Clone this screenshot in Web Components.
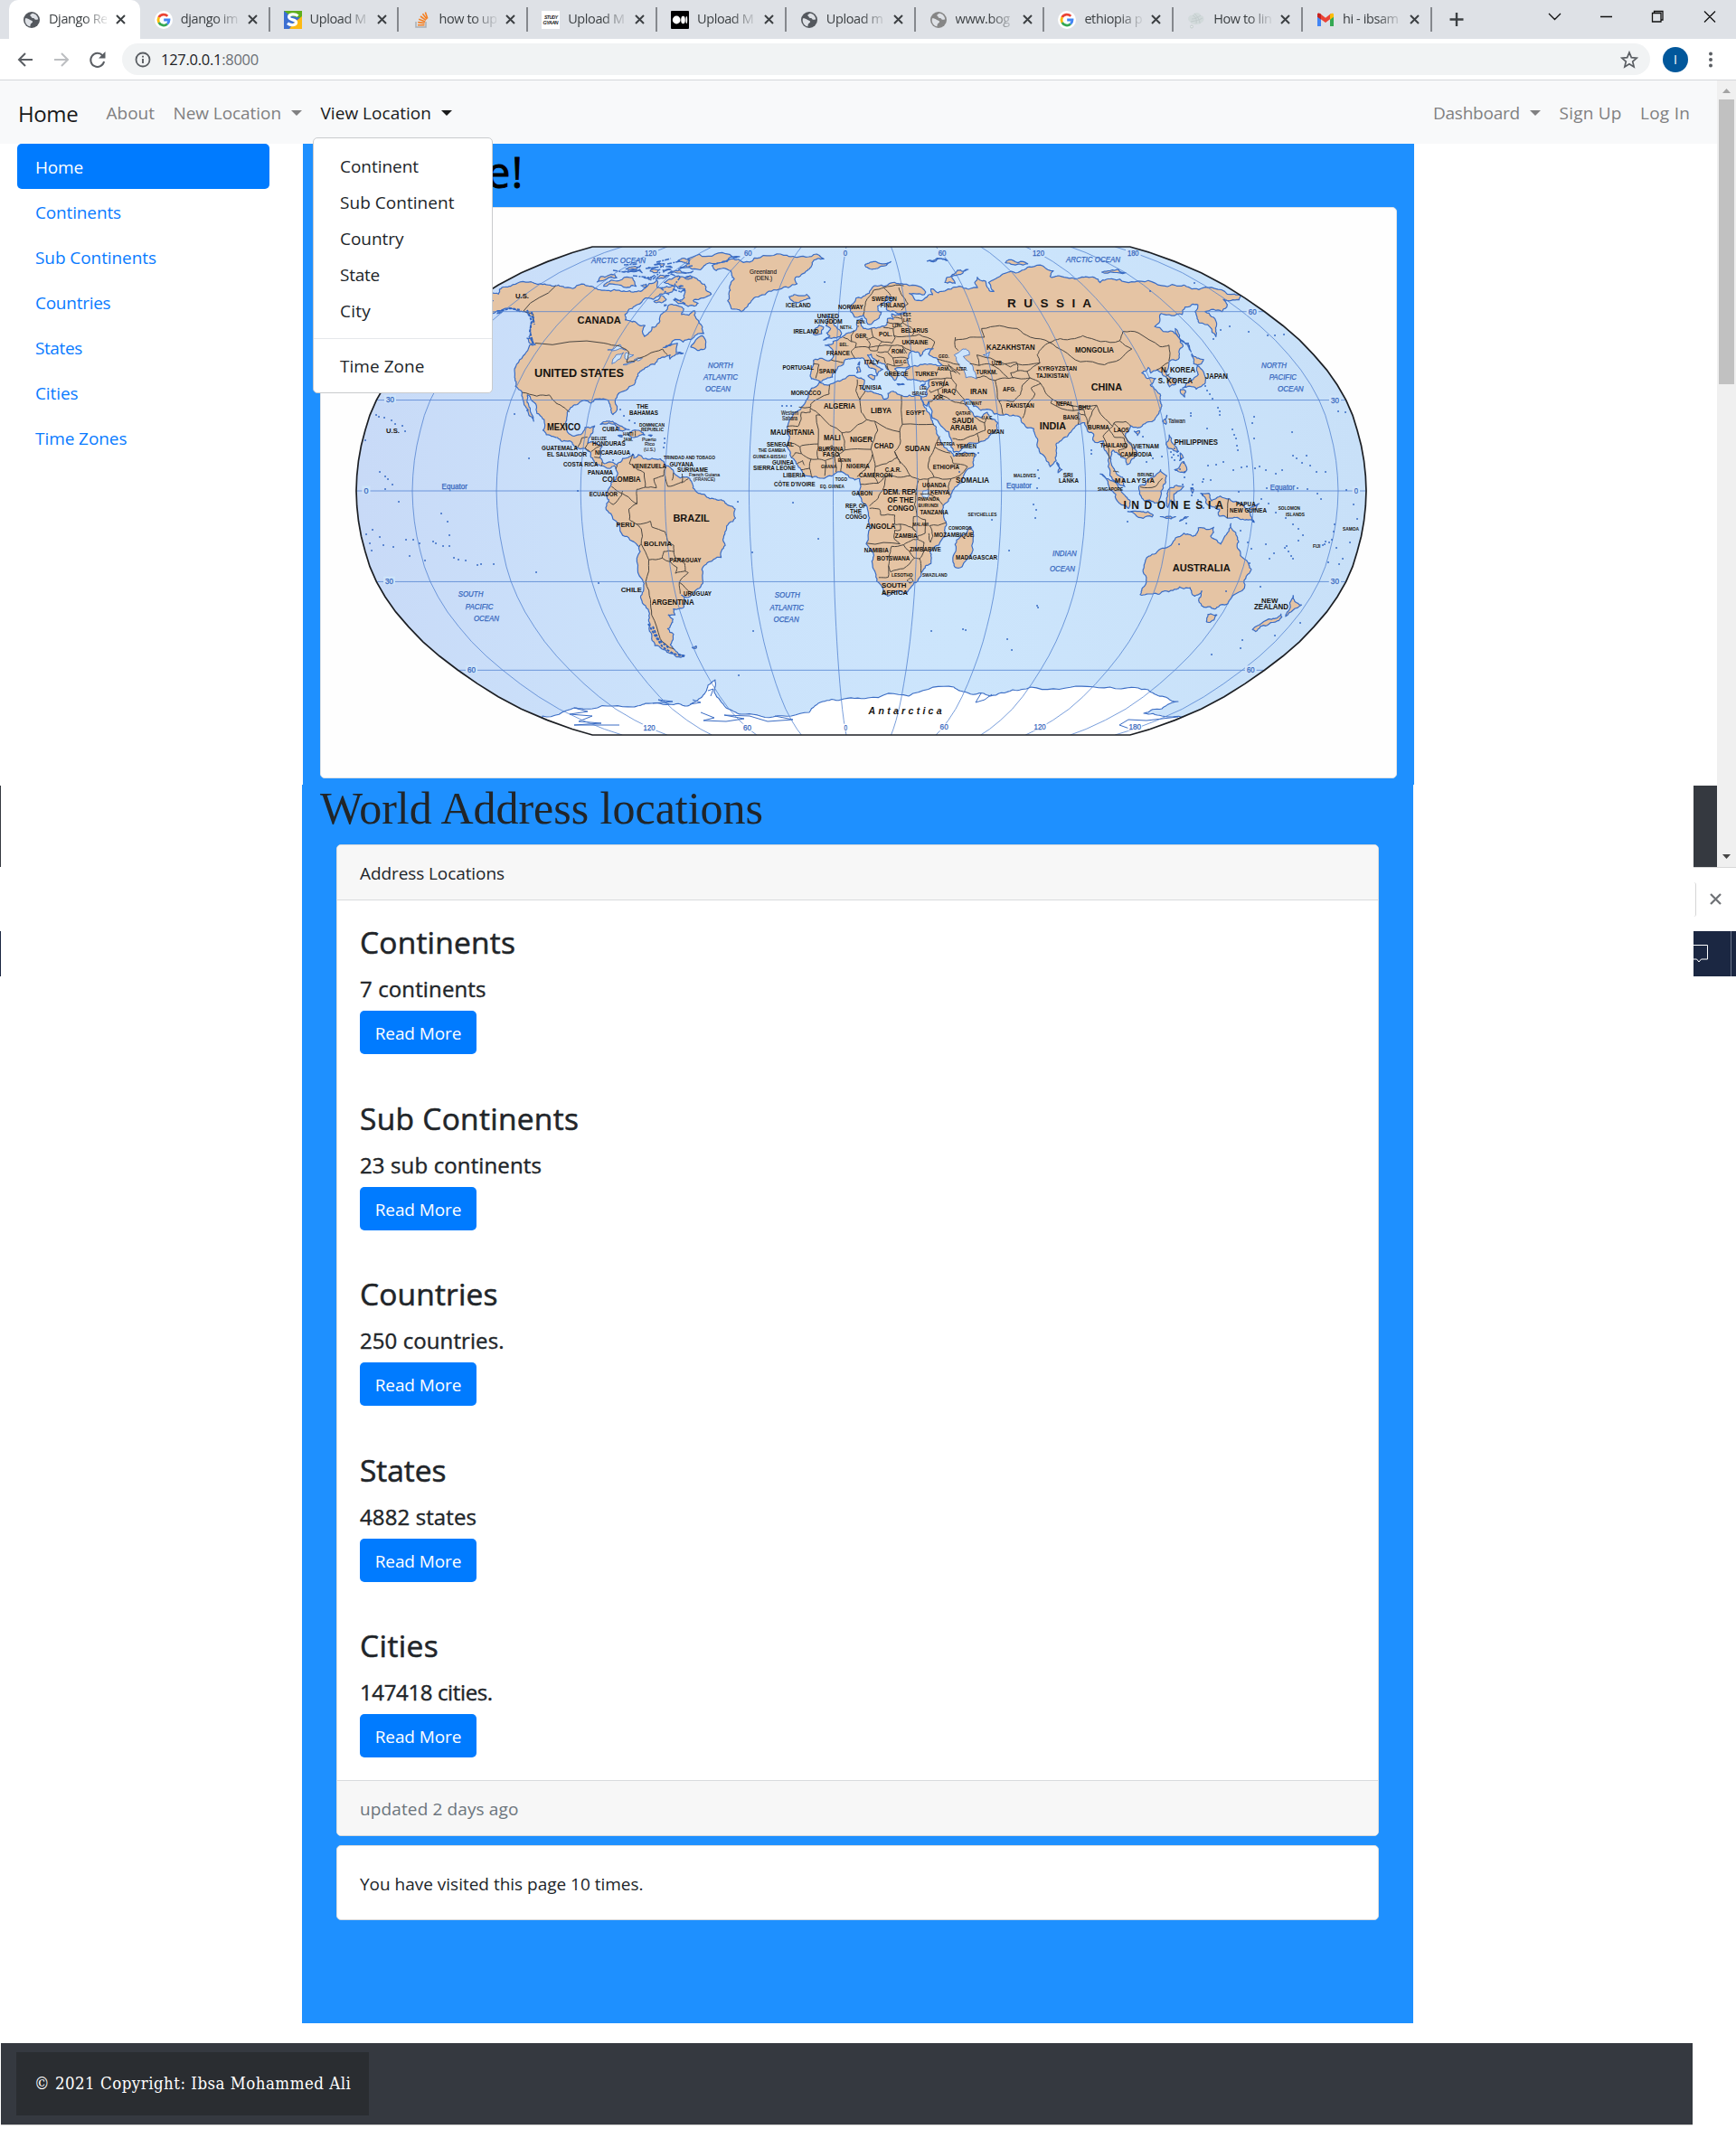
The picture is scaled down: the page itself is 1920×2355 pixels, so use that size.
<!DOCTYPE html>
<html lang="en">
<head>
<meta charset="utf-8">
<title>Django Rest</title>
<style>
html,body{margin:0;background:#fff}
body{font-family:"Open Sans","Noto Sans",sans-serif;font-size:19px;color:#212529;width:1920px;height:2355px;overflow:hidden}
</style>
</head>
<body>
<address-app></address-app>
<script>
const def=(name,html,init)=>customElements.define(name,class extends HTMLElement{
  connectedCallback(){
    if(this.shadowRoot)return;
    const r=this.attachShadow({mode:'open'});
    r.innerHTML=typeof html==='function'?html(this):html;
    if(init)init(this,r);
  }
});

/* ---------- application frame ---------- */
def('address-app',`<style>
:host{display:block}
.shell{display:grid;grid-template-columns:1920px}
.shell>*{grid-area:1/1}
edge-rail{justify-self:end}
.page{display:flex;flex-direction:column;width:1899px}
.cols{display:flex;align-items:flex-start}
side-nav{width:279px;margin:0 37px 0 19px}
main{display:flex;flex-direction:column}
.hero{background:#1e90ff;width:1191px;height:709px;padding:0 19px}
h1{margin:0 0 0 184px;height:69px;padding-top:1px;font-size:47px;line-height:61px;font-weight:400;-webkit-text-stroke:.9px #000;color:#000}
h2{margin:0;font:400 50px/52px "Liberation Serif",serif;height:66px;color:#212529}
.list{background:#1e90ff;width:1209px;height:1370px;margin-left:-1px;padding-left:20px}
.list>*:not(h2){margin-left:18px}
visit-card{margin-top:10px}
page-footer{margin:22px 0 0 1px}
</style>
<browser-bar></browser-bar>
<div class="shell">
 <div class="page">
  <site-nav></site-nav>
  <div class="cols"><side-nav></side-nav>
   <main>
    <section class="hero"><h1><fit-text w="41">e!</fit-text></h1><world-map></world-map></section>
    <section class="list"><h2><fit-text w="490">World Address locations</fit-text></h2>
     <address-card></address-card><visit-card></visit-card></section>
   </main>
  </div>
  <page-footer></page-footer>
 </div>
 <left-rail></left-rail>
 <edge-rail></edge-rail>
</div>`);

/* ---------- browser chrome ---------- */
const globe=c=>`<svg width="20" height="20" viewBox="0 0 20 20"><circle cx="10" cy="10" r="9" fill="${c}"/><path d="M3 8.2C4.600 8 6.500 8.700 8.200 10c1.200 1 2.600.6 2.900 2 .2 1.200-1.600 1.500-2.300 2.700-.3.700-.2 1.800-.4 2.600C5 16.700 2.600 13.600 2.700 10zM10.800 2.700c-.9.800-2.400 1-2.500 2.200 0 1 1.300.8 1.300 1.700 0 1 .9 1.700 2 1.400 1.500-.4 1.300 1.600 2.800 1.700 1.100.1 1.900-.4 2.800-.2C17.100 6 14.400 3 10.800 2.700z" fill="#dee1e6"/></svg>`;
const ICON={
 globe:globe('#54585e'),globe2:globe('#868686'),
 google:`<svg width="20" height="20" viewBox="0 0 20 20"><circle cx="10" cy="10" r="10" fill="#fff"/><g fill="none" stroke-width="2.800"><path d="M14.300 5.900A6 6 0 0 0 4.700 7.200" stroke="#ea4335"/><path d="M4.700 7.200a6 6 0 0 0 0 5.600" stroke="#fbbc05"/><path d="M4.700 12.800a6 6 0 0 0 9.300 1.700" stroke="#34a853"/><path d="M14 14.500A6 6 0 0 0 16 10h-5.800" stroke="#4285f4"/></g></svg>`,
 s:`<svg width="20" height="20"><path d="M0 0h20v20H0z" fill="#3c6fd1"/><path d="M0 0h20v8L8 6z" fill="#5fae1c"/><path d="M20 6v14H6l4-6z" fill="#fdb913"/><path d="M15.500 5.600C12 2.600 5.400 3.600 5.600 7c.2 3.500 8.300 2.300 8 5.800-.3 3.400-6.300 3.700-9.600 1" fill="none" stroke="#fff" stroke-width="3.200"/></svg>`,
 so:`<svg width="20" height="20" fill="none"><path d="M4 12v6h11v-6" stroke="#a9b0b7" stroke-width="1.500"/><path d="M6 15.700h7.500M6.200 12.600l7.400 1M7.200 9.300l7 2.600M9 6l6 4.400M11.500 3.200l4.600 6M14.400 1.500l2.400 7" stroke="#f48024" stroke-width="1.600"/></svg>`,
 gyaan:`<svg width="20" height="20"><path d="M0 0h20v20H0z" fill="#fff"/><g font-family="Liberation Sans" font-weight="700" fill="#222"><text x="3" y="8.500" font-size="5" textLength="15">STUDY</text><text x="1.500" y="14.800" font-size="5.500" textLength="17">GYAAN</text></g></svg>`,
 medium:`<svg width="20" height="20"><rect width="20" height="20" rx="1" fill="#000"/><circle cx="6.200" cy="10" r="4.400" fill="#fff"/><ellipse cx="13.500" cy="10" rx="2.300" ry="4.300" fill="#fff"/><ellipse cx="17.300" cy="10" rx=".9" ry="3.900" fill="#fff"/></svg>`,
 faint:`<svg width="20" height="20"><path d="M3 12C-1 9 2 4 6 5c1-4 8-4 9 0 4 0 5 6 1 8-3 3-11 3-13-1z" fill="#d2dadb"/><g fill="none" stroke="#c3cccd"><path d="M6 5c3 1 5 4 4 9M15 5c-3 2-6 4-10 4M4 12c4-1 8-1 13-4M8 3c2 2 6 6 6 11"/><circle cx="5" cy="17.500" r="1.500" fill="#e8ecec"/></g></svg>`,
 gmail:`<svg width="20" height="20"><path d="M1 5v12h4V9z" fill="#4285f4"/><path d="M19 5v12h-4V9z" fill="#34a853"/><path d="M1 5.500V4c0-1.500 1.800-2 3-1l6 4.800L16 3v5.500L10 13 1 6.500z" fill="#ea4335"/><path d="M1 5.500V4c0-1.500 2-2 4-.3V9.500L1 6.800z" fill="#c5221f"/><path d="M15 4c2-2 4-1.500 4 0v2.800L15 9.700z" fill="#fbbc04"/></svg>`
};
def('browser-tab',h=>`<style>
:host{display:flex;align-items:center;box-sizing:border-box;width:142.800px;height:43px;padding-left:15px;border-right:2px solid transparent}
i{display:block;width:20px;height:20px;line-height:0}
b{font:400 14.500px/20px "Open Sans",sans-serif;letter-spacing:-.4px;color:#3c4043;width:64px;margin:0 10px 0 9px;overflow:hidden;white-space:nowrap;padding-bottom:1px;
 -webkit-mask-image:linear-gradient(90deg,#000 60%,rgba(0,0,0,.15) 98%);mask-image:linear-gradient(90deg,#000 60%,rgba(0,0,0,.15) 98%)}
:host([on]){background:#fff;border-radius:10px 10px 0 0;width:145px;margin-right:.8px}
:host([sep]){border-image:linear-gradient(transparent 9px,#85888d 9px,#85888d 34px,transparent 34px) 2}
</style><i>${ICON[h.getAttribute('icon')]}</i><b><slot></slot></b><svg width="11" height="11"><path d="M1 1l9 9M10 1l-9 9" stroke="#3c4043" stroke-width="2"/></svg>`);
def('browser-bar',`<style>
:host{display:block;height:88px;border-bottom:1px solid #d5d7da;background:#fff;color:#3c4043}
.tabs{display:flex;height:43px;background:#dee1e6;padding-left:10px}
.win{display:block;margin-left:10px}
.bar{display:flex;align-items:center;height:45px;padding-left:19px}
.box{display:flex;align-items:center;width:1690px;height:35px;border-radius:18px;background:#f1f3f4;margin-left:16px}
.url{font-size:16.500px;line-height:34px;color:#202124;margin:0 auto 0 11px;white-space:nowrap}
.av{width:28px;height:28px;border-radius:50%;background:#01579b;color:#fff;font-size:14px;line-height:27px;text-align:center;margin:0 22px 0 14px}
</style>
<div class="tabs">
<browser-tab on icon="globe">Django Re</browser-tab><browser-tab sep icon="google">django im</browser-tab><browser-tab sep icon="s">Upload M</browser-tab><browser-tab sep icon="so">how to up</browser-tab><browser-tab sep icon="gyaan">Upload M</browser-tab><browser-tab sep icon="medium">Upload M</browser-tab><browser-tab sep icon="globe">Upload m</browser-tab><browser-tab sep icon="globe2">www.bog</browser-tab><browser-tab sep icon="google">ethiopia p</browser-tab><browser-tab sep icon="faint">How to lin</browser-tab><browser-tab sep icon="gmail">hi - ibsam</browser-tab>
<svg class="win" width="317" height="43" fill="none" stroke="#111" stroke-width="1.300"><path d="M9.500 21.500h15M17 14v15" stroke="#3c4043" stroke-width="2.400"/><path d="M119 15l6.500 6.500 6.500-6.500M176 18.500h13M233.500 14.500h9.500v9.500h-9.500zM235.500 14.500v-2h9.500v9.500h-2M291 12.500l12 12M303 12.500l-12 12"/></svg>
</div>
<div class="bar">
<svg width="100" height="24" fill="none" stroke="#5a5e63" stroke-width="2"><path d="M17 12H2M9 5l-7 7 7 7"/><path d="M41 12h15M49 5l7 7-7 7" stroke="#bcbec1"/><path d="M94.500 7.500a7.500 7.500 0 1 0 1.600 6.500"/><path d="M97.500 3v7.500h-7.500z" fill="#5a5e63" stroke="none"/></svg>
<div class="box"><svg width="18" height="18" style="margin-left:14px" fill="none" stroke="#5a5e63"><circle cx="9" cy="9" r="7.500" stroke-width="1.800"/><path d="M9 8v5M9 4.800v1.800" stroke-width="1.900"/></svg>
<div class="url"><fit-text w="108">127.0.0.1<span style="color:#6b6f74">:8000</span></fit-text></div>
<svg width="20" height="20" viewBox="0 0 20 20" style="margin-right:13px"><path d="M10 2l2.300 5.600 6 .5-4.600 3.900 1.400 5.900-5.100-3.200-5.100 3.200L6.300 12 1.700 8.100l6-.5z" fill="none" stroke="#5a5e63" stroke-width="1.700"/></svg></div>
<div class="av">I</div><svg width="6" height="20" fill="#5a5e63"><circle cx="3" cy="3.500" r="2"/><circle cx="3" cy="10" r="2"/><circle cx="3" cy="16.500" r="2"/></svg>
</div>`);

/* ---------- scrollbar and window edges ---------- */
def('edge-rail',`<style>
:host{display:flex;flex-direction:column;width:47px;height:991px}
.top{display:flex;justify-content:flex-end;height:870px;border-bottom:1px solid #d8d8d8}
.dark{width:26px;height:90px;background:#353940;align-self:flex-end}
.sb{width:21px;height:870px;background:#f0f0f0;display:flex;flex-direction:column;align-items:center}
.sb i{width:17px;height:315px;background:#c1c1c1;margin-bottom:auto}
.mid{height:70px;display:flex;align-items:center;background:#fff}
.mid i{width:2px;height:38px;border-right:1px solid #d5d5d5;border-radius:0 3px 3px 0;margin-right:15px}
.mid svg{margin-bottom:2px}
.task{height:50px;background:#1b2742}
svg{display:block}
</style>
<div class="top"><div class="dark"></div><div class="sb"><svg width="21" height="21"><path d="M6 14l4.500-5 4.500 5z" fill="#a3a3a3"/></svg><i></i><svg width="21" height="22"><path d="M6 8h9l-4.500 5z" fill="#444"/></svg></div></div>
<div class="mid"><i></i><svg width="13" height="13"><path d="M1 1l11 11M12 1L1 12" stroke="#707377" stroke-width="2.300"/></svg></div>
<div class="task"><svg width="47" height="50" fill="none"><path d="M0 15.500h15.500v15.500H8.500l-2.500 3-2.500-3H0" stroke="#fff"/><path d="M41.500 0v50" stroke="#6b748a"/></svg></div>`);
def('left-rail',`<style>:host{display:flex;flex-direction:column;width:1px;gap:71px;padding-top:780px;box-sizing:border-box;height:991px}i{display:block;height:90px;background:#353940}i+i{height:50px;background:#1b2742}</style><i></i><i></i>`);

/* ---------- site navigation ---------- */
def('caret-mark',`<style>:host{display:block;width:0;height:0;border:6px solid transparent;border-top-color:currentColor;border-bottom:0}</style>`);
def('site-nav',`<style>
:host{display:flex;align-items:center;height:70px;background:#f8f9fa;color:#808081;box-sizing:border-box;padding:0 30px 0 20px}
.brand{font-size:24px;color:#18191a;margin:2px 31px 0 0}
.item{display:flex;align-items:center;position:relative;margin-right:20.500px;padding-top:1px}
.item caret-mark{margin-left:11px}
.on{color:#191a1b}
.gap{flex:1}
drop-menu{position:absolute;left:-9px;top:41.500px}
</style>
<span class="brand"><fit-text w="66.500">Home</fit-text></span>
<span class="item"><fit-text w="53.500">About</fit-text></span>
<span class="item"><fit-text w="119.500">New Location</fit-text><caret-mark></caret-mark></span>
<span class="item on"><fit-text w="122.500">View Location</fit-text><caret-mark></caret-mark><drop-menu></drop-menu></span>
<span class="gap"></span>
<span class="item"><fit-text w="96">Dashboard</fit-text><caret-mark></caret-mark></span>
<span class="item"><fit-text w="69">Sign Up</fit-text></span>
<span class="item" style="margin:0"><fit-text w="55">Log In</fit-text></span>`);
def('drop-menu',`<style>
:host{display:flex;flex-direction:column;box-sizing:border-box;width:199px;height:283px;padding:11px 0 0;background:#fff;border:1px solid #c9cbcd;border-radius:5px;color:#212529;z-index:5}
span{padding-left:29.500px;line-height:40px;height:40px;display:block}
hr{margin:9.500px 0 10.500px;border:0;border-top:1px solid #e5e8eb;width:100%}
</style>
<span><fit-text w="87">Continent</fit-text></span><span><fit-text w="126.500">Sub Continent</fit-text></span><span><fit-text w="70.500">Country</fit-text></span><span><fit-text w="44">State</fit-text></span><span><fit-text w="34">City</fit-text></span><hr><span><fit-text w="93.500">Time Zone</fit-text></span>`);
def('side-nav',`<style>
:host{display:flex;flex-direction:column;color:#0a7bff}
a{display:block;height:50px;line-height:52px;padding-left:20px;border-radius:5px}
a.on{background:#007bff;color:#fff}
</style>
<a class="on"><fit-text w="53">Home</fit-text></a><a><fit-text w="95">Continents</fit-text></a><a><fit-text w="134">Sub Continents</fit-text></a><a><fit-text w="83.500">Countries</fit-text></a><a><fit-text w="52">States</fit-text></a><a><fit-text w="47.500">Cities</fit-text></a><a><fit-text w="101.500">Time Zones</fit-text></a>`);

/* ---------- cards ---------- */
def('count-block',h=>`<style>
:host{display:block;height:194.600px}
h3{margin:0 0 15px;font-size:33.500px;line-height:43px;height:42px;font-weight:400;-webkit-text-stroke:.55px #212529}
h5{margin:0 0 10px;font-size:24px;line-height:31px;height:30px;font-weight:400;-webkit-text-stroke:.4px #212529}
a{display:flex;justify-content:center;width:129px;height:48px;line-height:50px;border-radius:5px;background:#007bff;color:#fff}
</style><h3><fit-text w="${h.getAttribute('hw')}">${h.getAttribute('head')}</fit-text></h3><h5><fit-text w="${h.getAttribute('sw')}">${h.getAttribute('sub')}</fit-text></h5><a><fit-text w="95.500">Read More</fit-text></a>`);
def('address-card',`<style>
:host{display:flex;flex-direction:column;box-sizing:border-box;width:1153px;height:1097px;background:#fff;border:1px solid #d9dbdd;border-radius:5px;overflow:hidden}
header,footer{background:#f7f7f7;height:60px;line-height:62px;padding-left:25px}
header{border-bottom:1px solid #d9dbdd}
footer{border-top:1px solid #d9dbdd;color:#6c757d}
.body{height:948px;padding:25px 25px 0;overflow:hidden}
</style>
<header><fit-text w="160">Address Locations</fit-text></header>
<div class="body">
<count-block head="Continents" hw="172" sub="7 continents" sw="139.500"></count-block>
<count-block head="Sub Continents" hw="242" sub="23 sub continents" sw="201"></count-block>
<count-block head="Countries" hw="152.500" sub="250 countries." sw="159.500"></count-block>
<count-block head="States" hw="95.500" sub="4882 states" sw="129"></count-block>
<count-block head="Cities" hw="87" sub="147418 cities." sw="147"></count-block>
</div>
<footer><fit-text w="175.500">updated 2 days ago</fit-text></footer>`);
def('visit-card',`<style>:host{display:block;box-sizing:border-box;width:1153px;height:83px;line-height:84px;padding-left:25px;background:#fff;border:1px solid #d9dbdd;border-radius:5px}</style><fit-text w="313.500">You have visited this page 10 times.</fit-text>`);
def('page-footer',`<style>
:host{display:flex;align-items:center;width:1871px;height:90px;background:#353940;border-bottom:1px solid #d0d0d0;color:#fff;font-family:"DejaVu Serif Condensed","DejaVu Serif",serif;font-stretch:condensed;font-size:18.500px}
div{margin-left:17px;width:370px;height:70px;line-height:70px;padding-left:20px;background:#2a2d31}
</style><div><fit-text w="350">© 2021 Copyright: Ibsa Mohammed Ali</fit-text></div>`);

/* ---------- world map: Robinson projection centred on 10°E ---------- */
const RX=[1,.9986,.9954,.99,.9822,.973,.96,.9427,.9216,.8962,.8679,.835,.7986,.7597,.7186,.6732,.6213,.5722,.5322];
const RY=[0,.062,.124,.186,.248,.31,.372,.434,.4958,.5571,.6176,.6769,.7346,.7903,.8435,.8936,.9394,.9761,1];
const interp=(t,l)=>{const a=Math.abs(l)/5,i=Math.min(17,Math.floor(a));return t[i]+(t[i+1]-t[i])*(a-i)};
const proj=(lon,lat)=>[952.5+3.103*(lon-10)*interp(RX,lat),543-270*Math.sign(lat)*interp(RY,lat)];
const nums=s=>s.trim().split(/[\s,]+/).map(Number);
let seed=7;const rnd=()=>(seed=(seed*16807)%2147483647)/2147483647-.5;
/* adds small bays and headlands between the survey points of a coast */
function rough(p,closed,amp,depth){
  for(let d=0;d<depth;d++){const o=[];const n=p.length;
    for(let i=0;i<n;i++){o.push(p[i]);const q=p[(i+1)%n];if(!closed&&i===n-1)break;
      const dx=q[0]-p[i][0],dy=q[1]-p[i][1],L=Math.hypot(dx,dy);
      if(L>2.5){const k=rnd()*amp;o.push([(p[i][0]+q[0])/2-dy*k,(p[i][1]+q[1])/2+dx*k])}}
    p=o}
  return p}
const pathOf=(s,closed,amp,depth)=>{const v=nums(s),p=[];for(let i=0;i<v.length;i+=2)p.push(proj(v[i],v[i+1]));
  return 'M'+rough(p,closed,amp,depth).map(q=>q[0].toFixed(1)+' '+q[1].toFixed(1)).join('L')+(closed?'Z':'')};
const LAND=[
"-168,65.6 -163,66.5 -166,68.3 -163,69.5 -156.5,71.3 -150,70.5 -141,69.7 -135,69 -128,70.3 -124,69.5 -115,68 -108,68 -102,67.8 -96,68.3 -94,72 -90,69 -86,69.5 -82,69.5 -82,67 -86,66.5 -87,64.5 -93,62 -94.5,59 -92.5,57 -88,56.5 -82.3,55 -82,53 -80,51.3 -79,52 -79,54.5 -77,56 -78.5,58.5 -77.5,60 -78,62.3 -73,62 -70,61 -69.5,59 -66,58.7 -64.5,60.3 -62,57.5 -57.5,54.5 -55.8,52.3 -60,50.2 -66.5,50.2 -70,47.5 -65,49 -64.5,47 -64,45.8 -61,45.5 -65.5,43.6 -66,45 -70,43.8 -70.7,41.8 -74,40.5 -75.5,38 -76,36.5 -76,35 -81,31.8 -81.3,30 -80,26.5 -81,25.2 -82.7,28 -84,30 -89,30.3 -90,29 -94,29.5 -97.2,27.5 -97.7,24 -97.5,21.5 -96,19 -94.5,18.2 -91.5,18.6 -90.4,21 -87,21.5 -88,18.5 -88.6,15.8 -83.3,15 -83.7,11 -82,9 -79.5,9.5 -77.4,8.6 -75.5,10.7 -72,12.2 -71.5,10.8 -70,12 -68,10.6 -62,10.6 -60,8.4 -57,6 -51.5,4.3 -50,1 -48,-.8 -44,-2.6 -40,-2.9 -37,-4.9 -35,-6 -35,-9 -38.5,-13 -39.2,-18 -41,-22 -44.5,-23.2 -48.5,-26 -48.7,-28.5 -52,-32.8 -54.5,-34.8 -57.8,-34.4 -57,-36.5 -58,-38.3 -62.3,-39 -62.4,-41 -65,-41 -63.8,-42.5 -67.3,-45.6 -65.8,-47.5 -69,-51 -68.5,-52.5 -65.3,-54.8 -69,-55.3 -73.5,-52.5 -75.5,-49 -75,-46.5 -72.8,-42 -73.5,-37 -71.5,-32.5 -71.3,-29 -70.2,-20 -71.5,-17.3 -76.2,-14 -79.5,-7.5 -81.2,-5.5 -80,-3 -80.9,-1 -80,.8 -77.5,3.8 -77.3,6.5 -78.3,8.3 -80,7.4 -83,8.3 -85.7,10 -87.5,13 -91.5,14 -94.5,16.2 -98,16.3 -102,18 -105.5,20 -105.5,22.5 -109,25.6 -112.5,30 -114.7,31.7 -113,28.5 -111,25.5 -109.5,23 -112,25.5 -114,28 -115.8,30.3 -117.2,32.7 -120.5,34.5 -122.5,37.5 -124.3,40.3 -124,46 -124.7,48.4 -122.5,48.5 -127.5,51 -130.5,54.5 -133.5,58 -139.5,59.8 -146,60.8 -151.5,59.3 -151,61 -154,59.2 -158,56.5 -163,55 -158,58.5 -162,59 -165,61.5 -161,64 -166,64.5",
"-73,78.2 -68,76 -60,76 -55,72.5 -53.5,68 -52,64 -48.5,61 -43.5,60 -41,63.5 -38,65.8 -30,68.3 -22,70.5 -24,73 -19,76 -18,79.5 -12,81.5 -25,83 -35,83.5 -50,82.3 -62,81.3 -67,80",
"-61.5,66.5 -68,70.3 -78,73.5 -85,73.7 -89,71 -84,70 -76,68.5 -73,65 -77.5,64.4 -72,63 -66,62 -65,63 -68,64 -64,65","-77,76.3 -89,76.5 -87,79 -92,81.5 -80,83 -63,82.8 -68,80.5 -77,79","-80,75 -92,74.8 -90,76 -80,75.7","-105,69 -117,69.5 -117,72 -108,73 -101,69.5","-123,71.2 -125,73.5 -119,74.2 -116,73","-106,75 -117,75.5 -110,76.5","-91,73 -95,72.3 -95,74 -90.5,74","-88,79 -96,80.5 -90,81","-97,72 -102,73 -98,74","-98,75 -103,75.7 -99,76.5","-100,78 -106,78.6 -101,79","-112,77.5 -118,76.7 -113,78.3","-95,75.2 -97,76.2 -93,76.4","-96,78 -98,77.8 -94,77.4","-104,76.8 -107,77.4 -103,77.3","-96,69.3 -99,69.8 -97,70.3","-75,67.7 -77,67.3 -76,68.2","-79,69 -80,69.5 -78,69.6","-79.500,62 -80,62.500 -79,62.400","-81,73 -77,72.800 -79,73.800","-81,64 -86,63.7 -85,66 -81,64.5","-53,47 -59,47.7 -56,51.5 -53.5,49.3","-123.5,48.4 -128,50.7 -125,50",
"-85,22 -82,23.1 -77,21.3 -74.2,20.2 -77.5,19.9 -78,21 -82,22.5","-74.3,18.4 -73,19.9 -70,19.7 -68.4,18.5 -71.5,17.8","-78,18.3 -76.5,18.3 -76.5,17.8","-67,18.4 -65.7,18.4 -66,18",
"-6,35.8 -2,35.1 3,36.9 10,37.3 11,36.8 10.2,34 11.5,33.1 15.3,32.3 18.5,30.3 20,30.8 20,32.2 22,32.9 25,31.6 31,31.5 32.3,31.2 32.6,29.8 34,27 35.6,23.8 37.3,21 37.3,19 39.6,15.3 43,12.2 43.2,11.4 51.2,12 50,8 46,2.8 42,-1.2 39.2,-5 39.5,-8 40.6,-11 40.5,-15 35,-20 35.5,-24 32.8,-26 31,-29.8 27,-33.6 20,-34.8 18.3,-34 18,-32 15.2,-27 14.3,-22 11.8,-17.5 13.7,-12 13,-9 12.2,-5.5 9,-1 9.6,2.5 9.5,4 6,4.3 3,6.4 -2,4.8 -7.5,4.4 -11.5,6.9 -13.3,9 -15,11 -17,14.7 -16.3,19 -17,21 -14.8,25.7 -11,28.7 -9.7,31",
"-9,37 -9.4,38.7 -8.8,43.2 -1.8,43.4 -1.2,46 -4.7,48.3 -1.6,48.7 -1.5,49.6 1.7,50.9 4.5,52.5 8,53.8 8.2,57 10.5,57.6 10,55 11,54 14,54 18.5,54.7 21,55.5 21.5,57.5 24,57.3 23.5,59.2 30,59.9 23,60 21.3,61 21.5,63 25.3,65 22,65.8 17.5,62 17.5,60.5 19,59.8 16.5,57 14.3,55.5 12.8,55.6 11,59 7,58.1 5.2,60 5,62 12,66 15,68.5 20,70 26,71 31,70.3 41,67.3 40,66.3 33,66.7 35,64.3 38,64 40,65 44,66.3 44,68.5 47,67 54,68.5 60,68.8 65,69 67,69 67,71 70,73.2 73,71.5 72,68 74,67.5 74,71 78,72.3 82,73.5 87,75 98,76.3 104,77.6 113,75.8 108,73.5 113,73.8 123,73 127,73.3 130,71 139,72.4 150,71.6 160,69.6 170,70 171,69 180,69 188,66.5 190,66.1 186,64.3 179,64.5 177.5,62.5 171,60 163.5,60 163,56 157,51.2 155.5,56 159,60 164,62.5 157,61.7 152,59 143,59.3 135,54.7 141,53 140.5,48 135,43.5 131,42.8 129.5,41 127.5,39.5 129.4,36.5 129,35.2 126.3,34.4 126.7,37.5 124.5,40 121.5,39 121.5,40.8 118,39 119,37.2 122.4,37.2 119.3,35 121.8,31.5 121,28 118,24.5 113.5,22.2 110,21 108,21.5 105.8,19 109,13 107,10.5 105,8.7 104.8,10.5 102,12.5 100.5,13.5 99.3,10 100.5,7.2 103.3,4.5 104,1.4 101,3 98.3,8 98.6,12 97.5,16.5 94.3,16 94,19 91.5,22.5 88.5,21.7 86.5,20 82,16.5 80.2,15.5 80,12 79.8,10 77.5,8 76,11 73.5,16 72.7,20.5 70.5,20.8 69,22.3 67,24.8 61.5,25.1 57,26.9 54,26.6 51.5,27.9 50,30.2 48,29.9 50,26.7 51.5,24.5 54,24.1 56.3,26 57,24 59.8,22.4 57.8,19 55,17 52,15.7 45,12.8 43.3,12.8 42.7,16.5 39,21.5 35,28 34.9,29.5 34.3,28 32.6,29.8 32.3,31.2 34.3,31.3 35.8,34.5 36,36.8 32.5,36.1 30.5,36.7 27.5,36.8 26.3,39 29,41 31.5,41.3 35,42 41.5,41.6 38,44.5 36.8,45.3 39,47.1 35,46.3 33.5,44.5 32.5,46 30.5,46.3 28,43.5 28.8,41.3 26.2,40.7 23,40.3 24,38 22.8,36.5 21.3,38 19.5,41 19,42 14,45.2 12.5,45 13.6,43.5 18.4,40.2 16.8,39.5 16,38 15.7,40 12.3,41.8 10.2,44 7.5,43.8 3.5,43.3 3,41.8 -.3,39.5 -1,37.6 -4.5,36.7 -5.6,36",
"-5.5,50 1.3,51.2 1.5,52.8 -1.5,55 -2,57.6 -5,58.6 -5,55 -3,54 -4.5,52.5 -3,51.4","-10,52 -6.5,52.2 -6,54.5 -8,55.2 -9.5,54","-24,65.5 -22,64 -18.5,63.4 -14,64.8 -16,66.4 -22,66.3","12,78.5 16,76.6 22,78 27,80 17,80","52,71 57,70.7 57,73.5 68,76.5 62,76.2 54,73","48,80.3 60,80.6 54,81","92,79.5 100,78.7 104,79 96,81","138,75.3 150,75 144,76","8.3,39 9.7,39.3 9.3,41 8.3,40.8","8.7,41.7 9.4,42.7 9.3,41.6","12.6,38 15.4,38.1 15,36.8","23.6,35.4 26.3,35.2 24,35","32.5,34.8 34.3,35.5 33.5,34.8",
"131,34 136,33.6 140,35.3 142,39.5 141,41.4 139.5,38.5 136.5,36.8","140,42 143,42 145,43.5 141.8,45.4","130,33.5 131.8,33 130.5,31","142,46 143.5,49 143,54 142,53","120,23 121,22 122,25","109,19.7 111,19.8 110,18.3","120,16 121.5,18.5 122,16 124,13 120.6,14","122,7 125.5,9.7 126.4,7 125.5,6","124.5,12.5 125.5,11 124,10","95.3,5.6 98,4 103.5,-1 106,-3.5 105.5,-5.8 102,-4 98.5,1","105.2,-6.8 108,-6.7 112.5,-6.8 114.4,-8 114,-8.6 108,-7.8","109,1.5 111,1.8 115,5 117,7 119,5 117.7,1 116,-4 111,-3.3 109.3,-.5","119.5,-5.5 120.5,-3 122,-5 121.5,-1 125,1.5 120,1 119,-3","131,-.8 134,-.8 135,-3.3 138,-1.7 144.5,-3.9 147.5,-6 150.8,-10.4 147,-9.5 143,-9 138,-8.3 138,-6 133,-4","124,-10 127,-8.5 126,-8.5","117,-8.5 120,-8.4 122.5,-8.5 119,-9","148.5,-5.8 152,-4.2 151,-6","127.5,1 128.5,.5 128,-.8",
"114,-22 117,-20.7 122,-18 126,-14 129.5,-15 131,-12.2 136.5,-12 135.8,-15 140,-17.6 141.6,-14 142.5,-10.8 145.3,-15 146.3,-18.9 150.7,-23 153.3,-26 153,-31 150,-37.3 146.5,-39 144,-38.3 140.5,-38 138,-35.5 137.8,-33 136,-34.8 133,-32 129,-31.7 124,-33 120,-34 115.2,-34.3 115.7,-31.5 113.5,-26","144.7,-40.8 148.3,-41 147,-43.5 146,-43.3","173,-34.5 175,-36.5 178.5,-37.7 175.5,-41.5 175,-39.7","173,-40.7 174.2,-41.7 171,-44.5 168.5,-46.6 166.5,-45.9 171,-42.5","49.3,-12 50.3,-15.5 47,-25 44.5,-25.3 43.4,-22 44.4,-16.2","80,9.5 81.8,7 80.3,6","-58.5,-51.5 -60.5,-52 -59,-52.3"];
const LAKES=["47,45 51,47 53,46.5 53,45 50.5,44.5 53.5,41 54,37 50,37.4 49.500,40.300 47.500,43","58.500,45 61.500,46 60,43.800","-92,46.700 -88,48.500 -84.500,46.700 -88,46.800","-87.500,42 -86.500,42.500 -85,45.800 -87.500,45","-84,45.800 -80.500,45 -82,43.200 -83.500,44","-83,41.700 -79,42.700 -80.500,42.600","-79.500,43.300 -76.500,44 -77,43.400","32,0 34,.3 33.500,-2.500 32,-2"];
const BORDERS=["-123,49 -95,49 -88,48 -83,46 -82,42.500 -79,43 -75,45 -70,47 -67,45","-141,69.700 -141,60.200 -135,59 -131,56","-117,32.500 -111,31.300 -106.500,31.700 -103,29 -99.500,27.500 -97.200,26","-92,14.500 -91,17.500 -89,17.800","-88.500,15.800 -89.300,14.300 -87.500,13","-83.300,15 -87,13","-83.700,11 -85.700,11.200","-82.800,9.500 -82.900,8.200","-77.300,8.500 -77.800,7.300",
"-72,12 -73,9 -70,7 -67.500,6 -67,1.200 -70,.5 -70,-4.200 -73,-2 -77,0 -79,1.400","-67,1.200 -63,1 -64,4 -60.500,5 -60,8","-60,5 -59,1.500 -55,2.500 -51.700,4","-57,6 -57.500,3.500","-54,5.700 -54,2.500","-80,-3.500 -78.500,-4.500 -75.500,-1.500 -75,0","-70,-4.200 -73,-6 -73,-9.500 -70.500,-11 -69,-12.500 -69.500,-17.500 -70.300,-18.300","-70.500,-11 -65.500,-10 -65,-12 -60.500,-13.500 -60,-16.200 -57.800,-18 -58,-20","-69.500,-17.500 -67.500,-22.800 -62.500,-22.200 -61.700,-20 -58,-20 -57.800,-22 -54.500,-24 -54.700,-26.500 -58.500,-27.200 -57.500,-25.300 -62.500,-22.200","-54.700,-26.500 -53.700,-27 -57.600,-30.200 -58.200,-34","-57.600,-30.200 -53.500,-33.700","-67.500,-22.800 -70,-30 -70,-36 -71.500,-41 -72,-49 -70,-52 -68.500,-52.500","-72,19.800 -71.700,18",
"-13,27.700 -8.700,27.700 -8.700,28.700 -2,32 -2,35","-8.700,27.500 -8.700,26 -12,26 -12,23.500 -13,21.300 -17,21.300","-8.700,27.300 -5,25 3,19.200 6,19.500 12,23.500 10,26 9.500,30 8,33 8.500,36.800","9.500,30 11.500,33","12,23.500 15,23 24,19.500 24,20 25,22 25,31.500","25,22 36.500,22","24,19.500 24,15.500 22,13 23,11 19,9 15,8 14,12.500 13.500,14 16,20 15,23","-5,25 -6.500,25 -5.500,15.500 -11.500,15 -12,14.500 -16.500,16.200","-5.500,15.500 -5.500,10.500 -3,10 0,11 2,12 4,13.500 13.500,13.700","2,12 -.5,15 -4,13","4,13.500 4,16.500 3,19.200","2,12 3,9 2.700,6.400","1,6.200 .5,11","-3,5 -2.800,10","-7.500,4.500 -8.500,7.500 -8,10.500 -5.500,10.500","-8.500,7.500 -11.500,7","-8,10.500 -11.500,12.300 -13.700,12.600 -15,11","-11.500,12.300 -12,14.500","-13,9 -11,10 -10.300,8.500","8.500,4.700 11.500,7 14,12","15,8 14.500,5 16,2.500 9.800,2.200","16,2.500 18.500,5 23,4.500 27.500,5 31,3.700 36,4.500 42,4 45,5 48,8 43,9 42,11.500","23,11 26,7.500 27.500,5","22,13 24,9","36,4.500 34,7.500 34.500,11 36.500,14.500 38.500,18","36.500,14.500 42,12.500","41.500,-1.500 41,1.500 42,4","18.500,5 18,1 16,-2.500 13,-5","13,-5.800 16.500,-6 17,-8 22,-8 22,-11 24,-11 24,-13 22,-13 22,-16 24,-17.500 12,-17.300","30,-8.300 28.700,-8.500 28.500,-12 29.800,-13.500 28,-12 24,-11","30.500,3.500 29.500,-1.500 29,-4.500 30,-8.300 33,-9.500","31,-1 34,-1 34,4","34,-1 37.500,-3 39.200,-4.700","34.500,-11.500 40.400,-10.500","33,-9.500 33,-14 30.200,-15 30.400,-16 32.700,-17 32.700,-20 31.300,-22.400 31.800,-24 32,-27","25.300,-17.800 28.800,-16 30.400,-16","25.300,-17.800 29.300,-22.200 31.300,-22.400","29.300,-22.200 25.500,-25.700 20.800,-26.800 20,-24.800 20,-28.500 16.500,-28.600","20,-24.800 20,-22 21,-18.300 25.300,-17.800","34.500,-11.500 35.800,-15 35,-17 34.300,-14","27,-29.600 28.500,-28.700 29.300,-29.700 28,-30.500 27,-29.600",
"-8.800,41.900 -6.500,41.800 -7.400,37.200","-1.800,43.300 3,42.400","2.500,51 6,49.500 8,49 7.500,47.500 6,46.300 7.500,44","6,49.500 6,51.800 7,53.400","9,54.800 8.500,54.800","14.300,54 15,51 12.200,50.300 13.700,48.700 13,47.500 7.500,47.500","15,51 18.500,49.500 22.600,49 24,50.800 23.500,54 19.500,54.400","18.500,49.500 17,48 13,47.500 13.700,46.500 16.500,46.500 17,48 22.500,48.200 20.500,46 16.500,46","22.500,48.200 26.700,48 28.200,45.500","26.700,48 30,46.400","20.500,46 22.500,44 28.500,43.800","22.500,44 23,41.300 26.300,41.700","23,41.300 20,42 20.500,40 19.500,41.500","16,45 19,44 19.500,42.200","23.500,54 26.500,55.500 28,56 27.500,59.300","23.500,51.500 30.500,51.400 34,52 40,49.500 38.500,47.200","28,56 31,54.500 32.500,53 31,51.500","21,56.300 26.500,55.700","24.300,57.900 27.500,57.500","28,60.500 31.500,62.800 29,66.500 28.500,69","24,65.800 21,69 29,70 31,69.700","21,69 16,68 12,63.500 11,59",
"40,43.500 44,42.700 48.500,41.800","41.500,41.500 45,41 48,38.500","44,42 46.500,39 44.500,39.700","36,36.700 42,37.200 44.500,37.200 44.500,39.700 43.500,41","42,37.200 41,34.500 38.800,33.500 36,32.500 35.600,33.300","38.800,33.500 39,32 36,29.500 35,29.500","39,32 44.700,29.300 46.500,29.100 48,30","44.500,37.200 46,35 45.500,33.500 48.500,30","48.500,28.500 46.500,29","51.500,24.500 55,22.500 56,24.500","55,22.500 55,20 52,19 52.500,16","52,19 47,17 43,17.300","54,37.300 57,38 61,36.500 60.700,31 61.700,28.500 62,25.200","61,36.500 65,37.300 71,37 74.500,37.300 71,35 69.500,31.800 66.500,29.500 61,29.700","52.500,42 56,41.500 56,45 61,44 66,42 68,41 70.700,42 80,42.300 80,45 83,47.300 87,49.200","56,41.500 60,42 66,37.500","66,42 71,42.500 70.500,39.700 74,39.500 80,42.300","70.500,39.700 67.500,39 68,37.200","74,39.500 74.500,37.300 78,35.500 79,32.500 81,30.300 88,28 92,27.800 97,28.300 98.500,24.500 101.500,21.300 102.500,22.700 106.500,22.900 108,21.500","81,30.300 80.200,29 88,26.500 88,28","69,24 71,28 75,32 74,34 78,35.500","88,26.500 92,26.800 92,25 89.500,25.800 89,22","92,25 92.500,21","97,28.300 93.500,24 92.500,22","101.500,21.300 100,20.200 97.500,18 99,14 99,10.500","100,20.200 101.500,17.700 105,17.500 105.500,14.300 102.500,13.500 102.800,12","102,22.300 104.500,19.500 107.500,15.500 107.500,12.500 105,10.500","100,6.500 102,6.200","49,51 48,47.500 49,46.500","48.500,50 55,51 61,51 61,54 69,55 76,54 80,51 87,49.200 92,50.500 98,50.500 102,51.500 108,49.500 116,49.800 120,53 126,52.500 131,47.800 135,48.300 131,43","87,49.200 91,46.500 96,42.700 105,41.700 112,43.500 119,47 116,49.800","124.300,40 130.500,42.500","126.700,37.800 128.500,38.600","109.500,1.300 115,1.500 117.500,4.200","141,-2.600 141,-9"];
const DOTS="416,459 419,461 425,462 433,465 437,469 445,471 448,477 404,487 420,522 426,527 429,530 434,536 426,541 412,586 420,594 405,591 409,601 424,603 435,605 411,609 449,597 457,597 464,601 479,599 482,601 490,604 497,604 453,615 470,620 502,617 507,619 515,620 528,625 532,624 546,624 488,568 495,577 497,592 593,633 662,645 441,555 583,454 569,458 585,507 686,453 690,460 696,465 702,468 719,470 735,485 735,490 734,495 700,503 678,509 639,543 816,555 832,611 833,698 817,747 877,556 905,596 912,312 865,449 870,449 875,449 1061,522 1082,501 1148,520 1149,529 1147,540 1143,558 1146,564 1145,573 1097,575 1116,609 1147,670 1148,672 1030,698 1065,696 1068,697 1114,707 1119,719 1356,654 1394,649 1438,689 1410,703 1374,708 1372,717 1340,724 1342,375 1333,427 1335,432 1338,436 1341,441 1347,451 1349,455 1349,459 1335,474 1363,475 1365,481 1367,485 1368,493 1369,498 1387,461 1385,468 1387,485 1429,478 1317,457 1317,460 1336,515 1345,514 1353,511 1364,520 1373,517 1379,516 1388,518 1393,516 1400,520 1411,524 1418,520 1430,504 1434,507 1440,512 1445,504 1449,515 1456,522 1466,522 1339,531 1331,530 1319,540 1330,547 1370,544 1401,540 1435,540 1446,541 1489,542 1457,546 1461,552 1345,560 1395,552 1403,557 1411,567 1422,573 1430,580 1436,585 1441,592 1436,598 1476,580 1475,588 1470,600 1463,603 1478,606 1485,618 1493,600 1497,558 1501,574 1481,624 1469,622 1465,602 1473,597 1466,599 1380,600 1384,607 1400,602 1409,612 1423,604 1421,606 1425,610 1428,615 1430,618 1404,618 1382,623 1247,577 1312,579 1285,505 1296,506 1302,500 1306,507 1309,512 1299,509 1295,500 1305,519 1310,528 1308,536 1318,548 1325,553 1312,562 1331,562 1264,483 1207,498 1207,502 1268,511 1275,507 1480,455 1488,456 1272,322 1321,313 1299,496 1303,504 1298,503 1310,522 1318,540 1319,536 1330,533 1372,587 1386,577 1304,602 1350,365 1360,361 1402,371 1410,371 1420,370 1381,367";
/* text, left, right, baseline, size */
const BLACK=`U.S.|570|585|330|8
CANADA|638.5|686.7|358|11
UNITED STATES|591|690|416.7|12
MEXICO|605|642|476|10
U.S.|427|442|479|8
THE|704|717|452|7.5
BAHAMAS|696|728|458.7|7.5
DOMINICAN|707|735|471.7|5.5
REPUBLIC|709|734|476.5|5.5
CUBA|666|684.6|476.5|7.5
HAITI|689|700.5|481.5|5.5
BELIZE|654|671|486.5|6
JAM.|689|700|487.500|5.5
HONDURAS|655|691.7|493|8
GUATEMALA|599|639|497.5|8
EL SALVADOR|605|649|504.5|8
NICARAGUA|658|697|503|7.5
COSTA RICA|623|661.7|516|7.5
PANAMA|650|678|524.5|8
VENEZUELA|699|737|517.5|7.5
COLOMBIA|666|708.7|533|9
ECUADOR|651.7|683|548.5|7.5
TRINIDAD AND TOBAGO|734|791|507.5|5.5
GUYANA|740.5|767|515.5|7.5
SURINAME|749|783|521.5|7.5
ICELAND|869|896.7|340|7.5
NORWAY|927|954.7|342|7.5
SWEDEN|964|991.7|333|7.5
FINLAND|973.7|1001|339.5|7.5
EST.|999|1008|349.7|6
LAT.|999|1008|355.7|6
LITH.|987|998|361.5|6
DEN.|947.5|957.5|358|5.5
UNITED|903.7|928|351.5|8
KINGDOM|900.7|931.7|358|8
IRELAND|877.5|905.7|368.7|8
NETH.|929|942.7|364|6
GER.|945.7|959.7|373.5|8
POL.|972|986.7|371.5|8
BELARUS|996.5|1026.5|367.5|8
UKRAINE|997.5|1026.5|380.7|8
BEL.|928.5|938.5|383|6
FRANCE|914|940|392.7|8
ROM.|986|1001|390.7|8
ITALY|956|972.5|402.7|7.5
BULG.|990|1003.5|401.5|6
PORTUGAL|865.5|900|408.5|8
SPAIN|905.7|924.5|412.7|8
GREECE|978|1004.5|415.5|7.5
TURKEY|1012|1037.5|415.5|8
GEO.|1038|1049.7|395.7|6
ARM.|1036.5|1050|410|5.5
AZER.|1057|1070|409.5|6
KAZAKHSTAN|1091|1144.7|387|9.5
UZB.|1096.7|1109.7|404|7.5
TURKM.|1079.5|1103|414|7.5
TUNISIA|949.7|975|430.7|7.5
SYRIA|1029.7|1049.5|427|7.5
LEB.|1017|1026|431|6
ISRAEL|1008.7|1025.7|436.5|6
IRAQ|1041.7|1057|434.5|7.5
IRAN|1073|1091.7|436|9.5
AFG.|1109|1123.7|433|8
JOR.|1031.5|1044.7|441.5|7.5
KUWAIT|1068|1085.7|447.5|6
MOROCCO|874.7|908|436.7|7.5
ALGERIA|911|946|452|9
LIBYA|963|986|456.5|9
EGYPT|1002|1023|458.5|8
PAKISTAN|1112.7|1143.7|450.5|8
QATAR|1056.7|1073.5|459|6
U.A.E.|1085.7|1098.5|463.5|5.5
SAUDI|1052.7|1077|467.7|9
ARABIA|1050.7|1081|476|9
OMAN|1091.7|1110.5|479.7|7.5
MAURITANIA|852|900.7|480.7|9
MALI|911|929.7|487|9
NIGER|940|965|488.5|9
CHAD|966.7|988.5|496|9
SUDAN|1000.7|1028.5|498.5|9.5
ERITREA|1036|1056|492.5|6
YEMEN|1057.7|1080|496|8
DJIBOUTI|1056.7|1077.7|504.7|6
SENEGAL|848|877.7|494|7.5
THE GAMBIA|838.7|869|499.7|6
GUINEA-BISSAU|832.7|870|507|6
GUINEA|854|878|513.5|7.5
SIERRA LEONE|833|880|519.7|8
LIBERIA|866|890.7|528|7.5
CÔTE D'IVOIRE|856|901.5|538|6.8
BURKINA|905|933|498.5|7.5
FASO|910|928.7|504.5|7.5
BENIN|926.7|941|510.5|6
GHANA|908|925|517.5|6
TOGO|923.7|937|531.7|6
NIGERIA|936|961.7|517.5|8
C.A.R.|978.7|996.7|522|8
ETHIOPIA|1031.7|1061|518.7|8
CAMEROON|950|987|527.5|7.5
SOMALIA|1057|1094|534|9
EQ. GUINEA|907|933.7|539.9|5.3
GABON|942|965|548|7.5
DEM. REP.|976.7|1014|546.5|9
OF THE|981.5|1010.4|555.7|8.5
CONGO|981.5|1011|564.7|8.5
REP. OF|935|958|561.5|7
THE|940|953|567.5|7
CONGO|935|959|573.5|7
UGANDA|1020|1046.7|539|7.5
KENYA|1029|1050|546.5|7.5
RWANDA|1015|1039|554|5.5
BURUNDI|1015.5|1037.7|561|6
TANZANIA|1017.5|1048.7|569|7.5
ANGOLA|957.4|990.6|585.3|9
MALAWI|1009.6|1027|582|5.5
ZAMBIA|989.8|1014.7|594.7|7.5
MOZAMBIQUE|1033|1077|594|7.5
NAMIBIA|955.8|982.7|611|7.5
ZIMBABWE|1006|1040.8|610.3|7.5
BOTSWANA|969.7|1006.4|620.3|7.5
MADAGASCAR|1057|1103|618.7|7.5
LESOTHO|985.9|1009.6|638|6
SWAZILAND|1019.9|1047.6|637.7|6
SOUTH|975|1002.5|650|8
AFRICA|975|1004|657.7|8
SEYCHELLES|1070.5|1102.5|571.3|6
COMOROS|1049|1074.4|585.7|6
MALDIVES|1121|1146|527.5|6
MONGOLIA|1189|1232|390|9
KYRGYZSTAN|1148|1191|409.7|7.5
TAJIKISTAN|1146|1181.7|417.5|7.5
CHINA|1206.7|1241|431.5|11.5
N. KOREA|1284|1322|412|8.5
S. KOREA|1280.7|1319|424|8.5
JAPAN|1333|1358|418.7|8.5
NEPAL|1168|1187|448.7|7.5
BHU.|1192.7|1207.7|453|7
BANG.|1175.7|1194|463.7|7.5
INDIA|1149.7|1179|475|11
BURMA|1203|1227|474.5|7.5
LAOS|1231.7|1249|478|7.5
THAILAND|1216.7|1247|494.5|7.5
VIETNAM|1253|1281.7|496|7.5
CAMBODIA|1239|1274|504.7|7.5
PHILIPPINES|1298.7|1347|492|9
SRI|1175.7|1186.7|527.5|7.5
LANKA|1171|1193|533.7|7.5
BRUNEI|1258|1276|526.7|5.5
SINGAPORE|1214|1242|542.7|5.5
PERU|681.5|702|583|8
BRAZIL|744.4|784.7|577|11
BOLIVIA|712|743|604|8
PARAGUAY|740.4|775.6|622|7
CHILE|686.7|710|655|8
URUGUAY|756|787|658.7|7
ARGENTINA|720.7|767.7|669|9
PAPUA|1367|1388.8|559.7|7.5
NEW GUINEA|1360|1401|567|7.5
SOLOMON|1413.7|1438|564.3|6
ISLANDS|1422|1443|571.3|6
SAMOA|1484.9|1503|587|5.5
FIJI|1452|1460.4|605.7|5.5
AUSTRALIA|1296.7|1360.7|632|11
NEW|1395|1413.3|667|8
ZEALAND|1387|1425|673.7|8.5`;
const THIN=`Puerto|710|725.6|488|6
Rico|713|724|493|6
(U.S.)|712|725|498.5|6
French Guiana|762|796|527|6
(FRANCE)|767|791|531.7|6
Greenland|829|859|302.7|8
(DEN.)|834.7|854|309.5|7
Western|864|883|458.7|6.5
Sahara|865|882|464.5|6.5
Taiwan|1292|1311|468|7`;
const WIDE=`R U S S I A|1114|1207|340|13.5
M A L A Y S I A|1233|1277|534|7.5
I N D O N E S I A|1242.5|1353|562.7|12`;
const SEA=`ARCTIC OCEAN|654|714|290.5|9
ARCTIC OCEAN|1179|1239|289.5|9
NORTH|783|810.7|406.5|9
ATLANTIC|778|816|419.7|9
OCEAN|780|808|433|9
NORTH|1395|1423|406.5|9
PACIFIC|1403.7|1434|419.7|9
OCEAN|1413|1441.7|433|9
SOUTH|506.7|534.4|660|9
PACIFIC|514.7|545.5|674|9
OCEAN|524|552|687|9
SOUTH|856.7|884.8|660.7|9
ATLANTIC|851.5|889|675|9
OCEAN|855.5|883.6|688|9
INDIAN|1164|1190.7|615|9
OCEAN|1161|1189|631.7|9`;
const DEG=`120|713|726|283|8.5
60|823|831.7|283|8.5
0|932.7|937|283|8.5
60|1037.7|1046.5|283|8.5
120|1142|1155|283|8.5
180|1247|1259.5|283|8.5
60|1380.7|1389.7|347.7|8.5
30|427|436|445|8.5
30|1472|1481|445.5|8.5
0|402.5|407.5|545.5|8.5
0|1497.7|1502|545.7|8.5
30|426|435|645.7|8.5
30|1471.8|1481|646.3|8.5
60|517|526|743.7|8.5
60|1379|1387.6|744.3|8.5
120|711.6|724.6|807.7|8.5
60|822|831|807.7|8.5
0|933.4|937|807.7|8.5
60|1039.6|1048.7|807.3|8.5
120|1143.6|1156.7|807.3|8.5
180|1248.4|1262|807.3|8.5
Equator|488.5|517|540.5|8.5
Equator|1113|1141|540|8.5
Equator|1404.7|1432|541.5|8.5`;
const labels=(list,mode)=>list.split('\n').map(l=>{const [t,a,b,y,s]=l.split('|');
  return `<text x="${a}" y="${y}" font-size="${s}" textLength="${(b-a).toFixed(1)}" lengthAdjust="${mode||'spacingAndGlyphs'}">${t}</text>`}).join('');
const degPlates=DEG.split('\n').map(l=>{const [t,a,b,y]=l.split('|');return +y>790||t==='Equator'?'':`<rect x="${a-2}" y="${y-8}" width="${b-a+4}" height="9"/>`}).join('');
const platesLow=DEG.split('\n').map(l=>{const [t,a,b,y]=l.split('|');return +y>790?`<rect x="${a-1}" y="${y-7}" width="${b-a+2}" height="8"/>`:''}).join('');
function mapSvg(){
  const edge=lon=>{const p=[];for(let l=90;l>=-90;l-=5)p.push(proj(lon,l));return p};
  const str=p=>p.map(q=>q[0].toFixed(1)+' '+q[1].toFixed(1)).join('L');
  const frame='M'+str(edge(-170))+'L'+str(edge(190).reverse())+'Z';
  let grid='';for(let m=-150;m<=180;m+=30)grid+='M'+str(edge(m));
  for(const l of[60,30,0,-30,-60]){const a=proj(-170,l),b=proj(190,l);grid+=`M${a[0]} ${a[1]}H${b[0]}`}
  const land=LAND.map(s=>pathOf(s,true,.36,3)).join('');
  const lakes=LAKES.map(s=>pathOf(s,true,.3,2)).join('');
  const borders=BORDERS.map(s=>pathOf(s,false,.16,2)).join('');
  const ice='M'+str(rough(nums('600,792 635,783 655,784 700,782 714,778 740,779 760,781 775,772 783,758 791,752 790,766 803,783 820,790 855,793 895,788 910,776 930,774 960,772 1005,770 1010,767 1055,760 1065,765 1088,767 1095,770 1120,763 1140,760 1190,759 1240,762 1270,763 1285,770 1303,776 1285,784 1265,789 1285,792 1310,793').reduce((a,v,i)=>(i%2?a[a.length-1].push(v):a.push([v]),a),[]),false,.2,3));
  const dots=nums(DOTS);let dp='';for(let i=0;i<dots.length;i+=2)dp+=`M${dots[i]-.8} ${dots[i+1]}h1.700`;
  return `<svg viewBox="355 230 1189 630" width="1189" height="630" font-family="Liberation Sans,Arial,sans-serif">
<defs><linearGradient id="sea" x1="0" x2="1"><stop offset="0" stop-color="#c8daf7"/><stop offset=".3" stop-color="#cbe2fb"/><stop offset=".6" stop-color="#cce5fc"/><stop offset="1" stop-color="#c8e0f8"/></linearGradient><clipPath id="globe"><path d="${frame}"/></clipPath></defs>
<path d="${frame}" fill="url(#sea)"/>
<g clip-path="url(#globe)" stroke-linejoin="round">
<path d="${land}" fill="#e5c4a4" stroke="#3a6cc4" stroke-width="1.200"/>
<path d="${lakes}" fill="#cde4fb" stroke="#3a6cc4" stroke-width=".8"/>
<path d="${borders}" fill="none" stroke="#4a4642" stroke-width="1"/>
<path d="${ice}L1310 820H600Z" fill="#fff" stroke="#3a6cc4" stroke-width="1.100"/>
<path d="M635 783l15 4-20 3 25 2-15 6 25 2-30 2h50M775 788l15 6-12 3 25 1 20-3-22-4 28 1 20 6 28-2-20-4M740 779l-12-5 16 2-22 2M766 774l9 3-12 2M1303 793l-35 4-20-1-10 6 14 5M1085 767l-6 10 10-3 8-6M783 764l6-2-3 8" fill="none" stroke="#3a6cc4" stroke-width="1"/>
<path d="M717 690l8 14 8 12 12 7 12 3M722 693l6 14 12 10M583 343l5 12-2 12 4 14M588 345l3 14M550 345l14-4 12 2" fill="none" stroke="#2f63bf" stroke-width="2" stroke-dasharray="3 1.500"/>
<path d="M678 299l12 2 14-3M690 293l16-1M714 297l20-2M738 292l14-3M742 303l10 4-6 8M700 305l18 2M722 309l8-8M726 290l16-4M752 296l14-2M730 318l10 8M746 330l12 6M744 320l10 3" fill="none" stroke="#3a6cc4" stroke-width="1.500" stroke-dasharray="5 1.500 2 1"/>
<path d="${grid}" fill="none" stroke="#4f80d0" stroke-width=".9" opacity=".85"/>
<path d="${dp}" stroke="#2259bd" stroke-width="1.700"/>
</g>
<g fill="#cde3fa">${degPlates}</g><g fill="#fff">${platesLow}</g>
<path d="${frame}" fill="none" stroke="#1c1f24" stroke-width="1.700"/>
<g fill="#16130f" font-weight="700">${labels(BLACK)}${labels(WIDE,'spacing')}<text x="960.600" y="789.700" font-size="10.500" font-style="italic" textLength="81">Antarctica</text></g>
<g fill="#24211e" stroke="#24211e" stroke-width=".15">${labels(THIN)}</g>
<g fill="#3566bd" stroke="#3566bd" stroke-width=".25"><g font-style="italic">${labels(SEA)}</g>${labels(DEG)}</g>
</svg>`}
def('world-map',()=>`<style>:host{display:block;box-sizing:border-box;width:1191px;height:632px;background:#fefefe;border:1px solid #dee2e6;border-radius:5px;overflow:hidden;margin-left:0}:host-context(section){margin-left:0}svg{display:block}</style>${mapSvg()}`);

/* ---------- text whose tracking adapts to a given width ---------- */
def('fit-text','<style>:host{display:inline-block;white-space:nowrap}</style><slot></slot>',h=>{
  const w=+h.getAttribute('w'),n=h.textContent.length,now=h.getBoundingClientRect().width;
  h.style.letterSpacing=((w-now)/(n-.5)).toFixed(3)+'px';
  h.style.width=w+'px';
});
</script>
</body>
</html>
